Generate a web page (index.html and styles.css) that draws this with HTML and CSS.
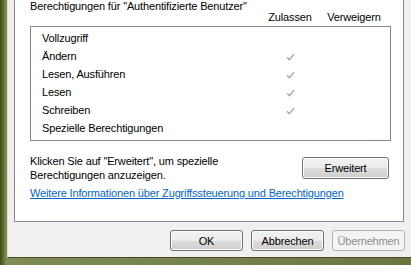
FILE: index.html
```html
<!DOCTYPE html>
<html lang="de">
<head>
  <meta charset="UTF-8" />
  <meta name="viewport" content="width=device-width, initial-scale=1.0" />
  <title>Eigenschaften | Sicherheit</title>
  <link rel="stylesheet" href="styles.css">
</head>
<body>
  <div class="window">
    <div class="tab-page">
      <div class="group-title">Berechtigungen für "Authentifizierte Benutzer"</div>
      <div class="perm-head">
        <span></span>
        <span>Zulassen</span>
        <span>Verweigern</span>
      </div>

      <div class="perm-list">
        <div class="perm-row"><span>Vollzugriff</span><span></span><span></span></div>
        <div class="perm-row"><span>Ändern</span><span class="check"><svg width="9" height="8" viewBox="0 0 9 8"><path d="M1 4.2 L3.4 6.6 L8 1.2" /></svg></span><span></span></div>
        <div class="perm-row"><span>Lesen, Ausführen</span><span class="check"><svg width="9" height="8" viewBox="0 0 9 8"><path d="M1 4.2 L3.4 6.6 L8 1.2" /></svg></span><span></span></div>
        <div class="perm-row"><span>Lesen</span><span class="check"><svg width="9" height="8" viewBox="0 0 9 8"><path d="M1 4.2 L3.4 6.6 L8 1.2" /></svg></span><span></span></div>
        <div class="perm-row"><span>Schreiben</span><span class="check"><svg width="9" height="8" viewBox="0 0 9 8"><path d="M1 4.2 L3.4 6.6 L8 1.2" /></svg></span><span></span></div>
        <div class="perm-row"><span>Spezielle Berechtigungen</span><span></span><span></span></div>
      </div>

      <div class="advanced">
        <p>Klicken Sie auf "Erweitert", um spezielle<br>Berechtigungen anzuzeigen.</p>
        <button class="btn btn-wide">Erweitert</button>
      </div>

      <a class="help-link" href="#">Weitere Informationen über Zugriffssteuerung und Berechtigungen</a>
    </div>

    <!-- Dialog-Schaltflächen -->
    <div class="dialog-buttons">
      <button class="btn">OK</button>
      <button class="btn">Abbrechen</button>
      <button class="btn" disabled>Übernehmen</button>
    </div>
  </div>
</body>
</html>
```

FILE: styles.css
```css
body {
  margin: 0;
  height: 265px;
  overflow: hidden;
  background: linear-gradient(to right, #3f4b1c 0, #5c6a2e 3px, #7f8d55 6px, #6a7642 100%);
  font-family: "Liberation Sans", Arial, sans-serif;
  font-size: 11px;
  letter-spacing: -0.15px;
  color: #000;
}

.window {
  box-sizing: border-box;
  height: 258px;
  margin-left: 7px;
  padding: 0 7px 0 6px;
  background: #f0f0f0;
  border-left: 1px solid #d9ded0;
  border-bottom: 1px solid #444a26;
  overflow: hidden;
}

.tab-page {
  margin-top: -1px;
  padding: 0 12px 21px 15px;
  background: #fff;
  border: 1px solid #898c95;
}

.group-title {
  padding-top: 1px;
  line-height: 10px;
}

.perm-head,
.perm-row {
  display: grid;
  grid-template-columns: 1fr 64px 64px;
}

.perm-head {
  line-height: 13px;
  padding-right: 5px;
}

.perm-head span,
.perm-row .check {
  text-align: center;
}

.perm-list {
  margin-top: 2px;
  padding: 2px 4px 3px 11px;
  border: 1px solid #828790;
}

.perm-row {
  line-height: 18px;
}

.check svg {
  vertical-align: -1px;
}

.check path {
  fill: none;
  stroke: #a9a9a9;
  stroke-width: 1.4;
}

.advanced {
  display: flex;
  justify-content: space-between;
  align-items: flex-start;
  margin-top: 13px;
}

.advanced p {
  margin: 0;
  line-height: 14px;
}

.help-link {
  display: block;
  width: fit-content;
  margin-top: 5px;
  line-height: 13px;
  color: #0066cc;
  text-decoration: underline;
}

.dialog-buttons {
  display: flex;
  justify-content: flex-end;
  gap: 8px;
  margin-top: 8px;
  margin-right: -1px;
}

.btn {
  width: 73px;
  height: 21px;
  padding: 0;
  font: inherit;
  letter-spacing: inherit;
  color: #000;
  border: 1px solid #707070;
  border-radius: 3px;
  background: linear-gradient(#f2f2f2 0, #ebebeb 50%, #dddddd 50%, #cfcfcf 100%);
  box-shadow: inset 0 0 0 1px #fcfcfc;
}

.btn-wide {
  width: 87px;
  height: 22px;
  margin: 3px 2px 0 0;
}

.btn:disabled {
  color: #8d8d8d;
  border-color: #adb2b5;
  background: #f4f4f4;
  box-shadow: none;
}
```
